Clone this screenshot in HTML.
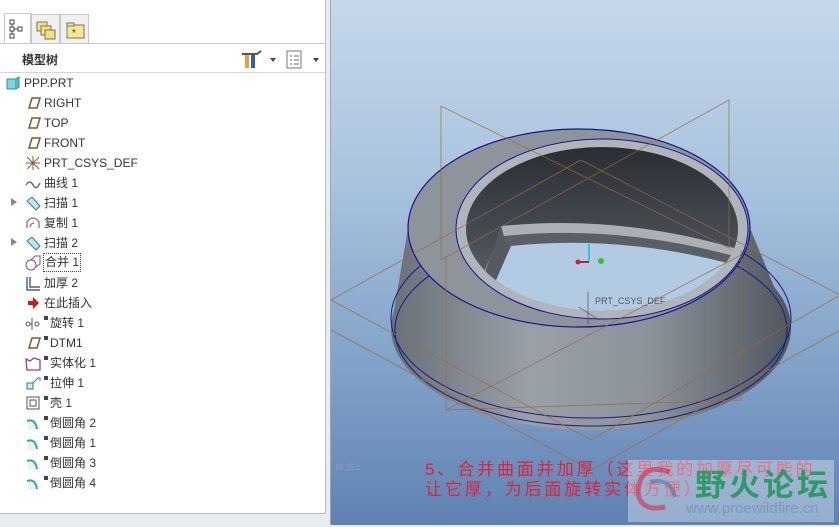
<!DOCTYPE html>
<html><head><meta charset="utf-8"><style>
*{margin:0;padding:0;box-sizing:border-box}
body{width:839px;height:527px;overflow:hidden;background:#e8ecf0;font-family:"Liberation Sans","Noto Sans CJK SC",sans-serif;position:relative}
#panel{position:absolute;left:0;top:0;width:326px;height:514px;background:#fff;border-right:1px solid #b8bcc2;border-bottom:1px solid #b8bcc2}
.tab{position:absolute;top:14px;height:29px;border:1px solid #c4c8cc;border-bottom:none;background:#f0f0f0}
#hdr{position:absolute;left:0;top:43px;width:325px;height:30px;border-top:1px solid #c4c8cc;border-bottom:1px solid #d4d8dc}
.it{position:absolute;font-size:12px;color:#333;height:20px;line-height:20px;white-space:nowrap}
.ic{position:absolute;width:16px;height:16px}
.sq{position:absolute;width:4px;height:4px;background:#444}
#vp{position:absolute;left:330px;top:0;width:509px;height:525px;background:linear-gradient(#c6d8ea 0%,#a9c3de 35%,#86a6cb 65%,#5f82b2 100%);border-left:1px solid #9aa;overflow:hidden}
.cap{position:absolute;left:425px;font-size:17px;color:#e02040;letter-spacing:2.9px;white-space:nowrap;font-family:"Liberation Sans","Noto Sans CJK SC",sans-serif}
</style></head><body>
<div id="panel">
 <div class="tab" style="left:4px;width:27px;background:#fff;top:13px;height:31px"><svg width="25" height="28"><g fill="none" stroke="#444"><rect x="5" y="6" width="4" height="4"/><rect x="5" y="13" width="4" height="4"/><rect x="5" y="20" width="4" height="4"/><rect x="13" y="13" width="4" height="4"/><path d="M7 10v3M7 17v3M9 15h4"/></g></svg></div>
 <div class="tab" style="left:31px;width:29px"><svg width="28" height="28"><rect x="5" y="7" width="10" height="9" fill="#f2e27a" stroke="#776"/><rect x="9" y="11" width="10" height="9" fill="#f2e27a" stroke="#776"/><rect x="13" y="15" width="10" height="9" fill="#f2e27a" stroke="#776"/></svg></div>
 <div class="tab" style="left:60px;width:29px"><svg width="28" height="28"><rect x="6" y="10" width="17" height="13" fill="#f4e890" stroke="#776"/><rect x="6" y="8" width="7" height="3" fill="#f4e890" stroke="#776"/><text x="11" y="21" font-size="10" fill="#335">*</text></svg></div>
 <div id="hdr">
  <div style="position:absolute;left:22px;top:7px;font-size:12px;font-weight:bold;color:#333">模型树</div>
  <svg style="position:absolute;left:240px;top:5px" width="85" height="22"><rect x="5" y="6" width="4" height="13" fill="#e8a030"/><rect x="11" y="6" width="4" height="13" fill="#3060b0"/><path d="M2 5h15l4-3" stroke="#555" stroke-width="2" fill="none"/><path d="M30 9l3 4 3-4z" fill="#444"/><rect x="47" y="2" width="14" height="17" fill="#fff" stroke="#777"/><path d="M50 7h2M54 7h5M50 11h2M54 11h5M50 15h2M54 15h5" stroke="#666"/><path d="M73 9l3 4 3-4z" fill="#444"/></svg>
 </div>
 <svg class="ic" style="left:5px;top:75px"><path d="M2 4h9v10H2z" fill="#7fd6e0" stroke="#3a8a99"/><path d="M11 4l3-2v10l-3 2" fill="#5bb" stroke="#3a8a99"/></svg><div class="it" style="left:24px;top:73px">PPP.PRT</div>
 <svg class="ic" style="left:25px;top:95px"><path d="M4 13l3-10h8l-3 10z" fill="none" stroke="#7a5a3a" stroke-width="1.5"/></svg><div class="it" style="left:44px;top:93px">RIGHT</div>
 <svg class="ic" style="left:25px;top:115px"><path d="M4 13l3-10h8l-3 10z" fill="none" stroke="#7a5a3a" stroke-width="1.5"/></svg><div class="it" style="left:44px;top:113px">TOP</div>
 <svg class="ic" style="left:25px;top:135px"><path d="M4 13l3-10h8l-3 10z" fill="none" stroke="#7a5a3a" stroke-width="1.5"/></svg><div class="it" style="left:44px;top:133px">FRONT</div>
 <svg class="ic" style="left:25px;top:155px"><path d="M2 2l12 12M14 2L2 14M8 1v14M1 8h14" stroke="#8a5a3a" fill="none"/></svg><div class="it" style="left:44px;top:153px">PRT_CSYS_DEF</div>
 <svg class="ic" style="left:25px;top:175px"><path d="M1 10q4-6 7 0t7-2" stroke="#555" fill="none" stroke-width="1.3"/></svg><div class="it" style="left:44px;top:173px">曲线 1</div>
 <svg class="ic" style="left:10px;top:197px" width="8" height="10"><path d="M1 1l6 4-6 4z" fill="#888"/></svg>
 <svg class="ic" style="left:25px;top:195px"><path d="M2 6l5-4 8 9-4 4z" fill="#bfe6ea" stroke="#3a7a8a"/></svg><div class="it" style="left:44px;top:193px">扫描 1</div>
 <svg class="ic" style="left:25px;top:215px"><path d="M2 13V7q6-8 12 0v6M5 12q1-4 4-4" fill="none" stroke="#a060a0" stroke-width="1.3"/></svg><div class="it" style="left:44px;top:213px">复制 1</div>
 <svg class="ic" style="left:10px;top:237px" width="8" height="10"><path d="M1 1l6 4-6 4z" fill="#888"/></svg>
 <svg class="ic" style="left:25px;top:235px"><path d="M2 6l5-4 8 9-4 4z" fill="#bfe6ea" stroke="#3a7a8a"/></svg><div class="it" style="left:44px;top:233px">扫描 2</div>
 <svg class="ic" style="left:25px;top:255px"><circle cx="6" cy="10" r="5" fill="none" stroke="#805090"/><path d="M6 5l4-4h5v8l-4 3" fill="none" stroke="#805090"/></svg><div class="it" style="left:43px;top:253px;border:1px dotted #444;line-height:17px;height:19px;padding:0 1px">合并 1</div>
 <svg class="ic" style="left:25px;top:275px"><path d="M2 2v13h13M5 2v10h10" fill="none" stroke="#304060" stroke-width="1.2"/></svg><div class="it" style="left:44px;top:273px">加厚 2</div>
 <svg class="ic" style="left:25px;top:295px"><path d="M3 6h5V2l6 6-6 6v-4H3z" fill="#d01818"/></svg><div class="it" style="left:44px;top:293px">在此插入</div>
 <svg class="ic" style="left:25px;top:315px"><circle cx="3" cy="9" r="2" fill="none" stroke="#555"/><circle cx="12" cy="9" r="2" fill="none" stroke="#555"/><path d="M7 3v12M5 9h2" stroke="#555"/></svg><div class="sq" style="left:44px;top:316px"></div><div class="it" style="left:50px;top:313px">旋转 1</div>
 <svg class="ic" style="left:25px;top:335px"><path d="M4 13l3-10h8l-3 10z" fill="none" stroke="#7a5a3a" stroke-width="1.5"/></svg><div class="sq" style="left:44px;top:336px"></div><div class="it" style="left:50px;top:333px">DTM1</div>
 <svg class="ic" style="left:25px;top:355px"><path d="M1 4l4 2 4-3 6 2v10H2z" fill="none" stroke="#904090" stroke-width="1.3"/></svg><div class="sq" style="left:44px;top:356px"></div><div class="it" style="left:50px;top:353px">实体化 1</div>
 <svg class="ic" style="left:25px;top:375px"><rect x="2" y="8" width="6" height="6" fill="#cfeaf0" stroke="#3a7a8a"/><path d="M8 8l5-5h2v3" fill="none" stroke="#3a7a8a"/></svg><div class="sq" style="left:44px;top:376px"></div><div class="it" style="left:50px;top:373px">拉伸 1</div>
 <svg class="ic" style="left:25px;top:395px"><rect x="2" y="2" width="12" height="12" fill="none" stroke="#555"/><rect x="5" y="5" width="6" height="6" fill="none" stroke="#555"/></svg><div class="sq" style="left:44px;top:396px"></div><div class="it" style="left:50px;top:393px">壳 1</div>
 <svg class="ic" style="left:25px;top:415px"><path d="M2 6q8-5 12 5l-4 4H3z" fill="#e8f4ea"/><path d="M2 6q8-3 10 8" fill="none" stroke="#3aa0b0" stroke-width="2"/></svg><div class="sq" style="left:44px;top:416px"></div><div class="it" style="left:50px;top:413px">倒圆角 2</div>
 <svg class="ic" style="left:25px;top:435px"><path d="M2 6q8-5 12 5l-4 4H3z" fill="#e8f4ea"/><path d="M2 6q8-3 10 8" fill="none" stroke="#3aa0b0" stroke-width="2"/></svg><div class="sq" style="left:44px;top:436px"></div><div class="it" style="left:50px;top:433px">倒圆角 1</div>
 <svg class="ic" style="left:25px;top:455px"><path d="M2 6q8-5 12 5l-4 4H3z" fill="#e8f4ea"/><path d="M2 6q8-3 10 8" fill="none" stroke="#3aa0b0" stroke-width="2"/></svg><div class="sq" style="left:44px;top:456px"></div><div class="it" style="left:50px;top:453px">倒圆角 3</div>
 <svg class="ic" style="left:25px;top:475px"><path d="M2 6q8-5 12 5l-4 4H3z" fill="#e8f4ea"/><path d="M2 6q8-3 10 8" fill="none" stroke="#3aa0b0" stroke-width="2"/></svg><div class="sq" style="left:44px;top:476px"></div><div class="it" style="left:50px;top:473px">倒圆角 4</div>
</div>
<div id="vp">
<svg width="509" height="525" style="position:absolute;left:0;top:0">
 <defs>
  <linearGradient id="body" x1="0" x2="1"><stop offset="0" stop-color="#6a7078"/><stop offset="0.35" stop-color="#9aa0a8"/><stop offset="0.65" stop-color="#8c929a"/><stop offset="1" stop-color="#50565e"/></linearGradient>
  <linearGradient id="hole" x1="0" y1="0" x2="0" y2="1"><stop offset="0" stop-color="#2a2e33"/><stop offset="0.6" stop-color="#4a4f56"/><stop offset="1" stop-color="#6a6f76"/></linearGradient>
  <clipPath id="hc"><ellipse cx="601" cy="229" rx="136" ry="82"/></clipPath>
 </defs>
 <g transform="translate(-330,0)">
  <ellipse cx="590" cy="328" rx="200" ry="102" fill="url(#body)"/>
  <path d="M407 228 L749 228 L790 328 L390 328 Z" fill="url(#body)"/>
  <ellipse cx="590" cy="318" rx="200" ry="100" fill="none" stroke="#1a1a8a" stroke-width="1"/>
  <ellipse cx="590" cy="330" rx="196" ry="96" fill="none" stroke="#1a1a8a" stroke-width="1"/>
  <ellipse cx="578" cy="228" rx="171" ry="99" fill="#8e949c" stroke="#141490" stroke-width="1.2"/>
  <ellipse cx="601" cy="229" rx="146" ry="90" fill="#b0b5bb" stroke="#141490" stroke-width="1"/>
  <ellipse cx="601" cy="229" rx="136" ry="82" fill="url(#hole)"/>
  <g clip-path="url(#hc)">
   <path d="M500 230 Q620 218 740 254 L745 330 L460 330 Z" fill="#b2cae2"/>
   <path d="M500 226 Q620 214 740 250 L740 258 Q620 224 503 236 Z" fill="#aab0b6"/>
   <path d="M503 236 Q620 224 740 258 L738 266 Q620 234 510 246 Z" fill="#5a5f66"/>
   <path d="M500 226 L470 312 L481 312 L510 246 L503 236 Z" fill="#555a61"/>
  </g>
  <g stroke="#9a6a3a" stroke-width="0.8" fill="none" opacity="0.85">
   <path d="M440 106 L440 260 L728 100 L728 248 Z"/>
   <path d="M445 255 L445 410 L740 400 L740 250"/>
   <path d="M330 300 L580 160 L839 295 L590 440 Z"/>
   <path d="M330 330 L590 470 L839 330"/>
   <path d="M445 410 L740 255"/>
  </g>
  <path d="M588 262 V244" stroke="#30c8e0" stroke-width="2"/>
  <path d="M588 262 L577 262" stroke="#c02030" stroke-width="2"/>
  <circle cx="577" cy="262" r="2.5" fill="#d02030"/>
  <circle cx="600" cy="261" r="3" fill="#30c040"/>
  <text x="594" y="304" font-size="9" fill="#555" font-family="Liberation Sans">PRT_CSYS_DEF</text>
  <path d="M587 292 V325 M578 307 L598 320" stroke="#555" stroke-width="0.7"/>
 </g>
</svg>
</div>
<div class="cap" style="top:455px">5、合并曲面并加厚（这里我的加厚尽可能的</div>
<div class="cap" style="top:475px">让它厚，为后面旋转实体方便）</div>
<div style="position:absolute;left:628px;top:460px;width:206px;height:62px;background:rgba(255,255,255,0.35)"></div>
<div style="position:absolute;left:695px;top:460px;font-size:31px;font-weight:bold;color:#2e9a6a;letter-spacing:3px;font-family:'Noto Sans CJK SC',sans-serif">野火论坛</div>
<div style="position:absolute;left:686px;top:500px;font-size:15px;color:#7a9ab8">www.proewildfire.cn</div>
<svg style="position:absolute;left:630px;top:462px" width="60" height="60"><path d="M40 10 Q10 0 8 30 Q10 50 35 45" fill="none" stroke="#c84060" stroke-width="5" opacity="0.7"/><path d="M20 20 Q40 15 45 35" fill="none" stroke="#6070a0" stroke-width="4" opacity="0.6"/></svg>
<div style="position:absolute;left:335px;top:460px;font-size:9px;color:#8a9ab8">曲:曲1</div>
</body></html>
